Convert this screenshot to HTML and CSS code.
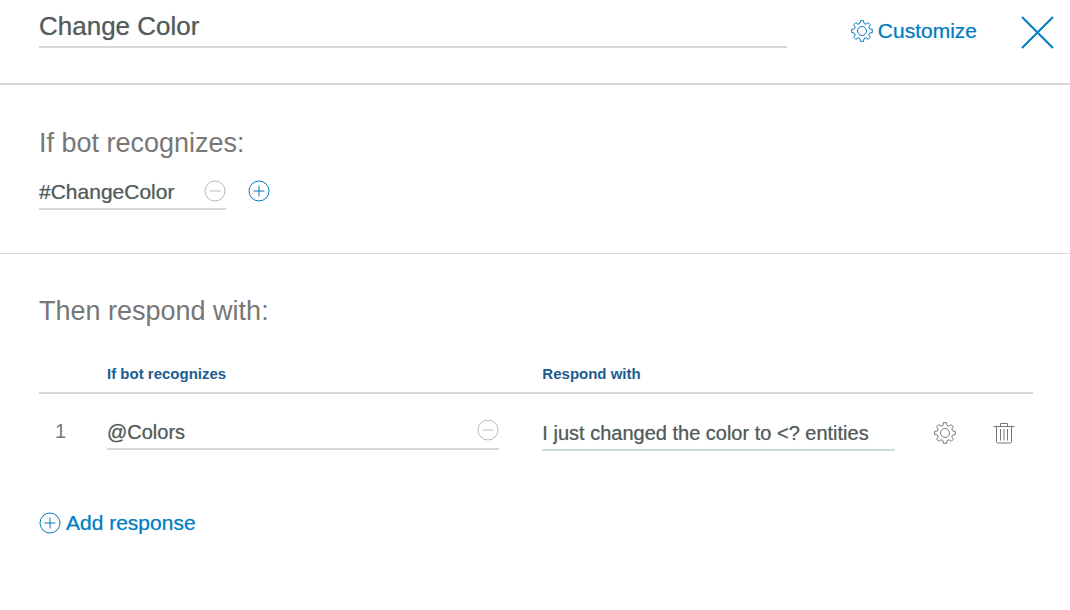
FILE: index.html
```html
<!DOCTYPE html>
<html lang="en">
<head>
<meta charset="utf-8">
<title>Change Color</title>
<link rel="stylesheet" href="styles.css">
</head>
<body>
<svg class="sprite" aria-hidden="true">
  <symbol id="gear" viewBox="0 0 22 22">
    <path stroke-linejoin="round" d="M9.1 3.100L9.4 .7H12.6L12.9 3.100Q13.8 4.200 15.2 4.100L17.2 2.600L19.4 4.800L17.9 6.800Q17.8 8.200 18.9 9.100L21.3 9.400V12.6L18.9 12.9Q17.8 13.8 17.9 15.2L19.4 17.2L17.2 19.4L15.2 17.9Q13.8 17.8 12.9 18.9L12.6 21.3H9.4L9.1 18.9Q8.2 17.8 6.800 17.9L4.800 19.4L2.600 17.2L4.100 15.2Q4.200 13.8 3.100 12.9L.7 12.6V9.400L3.100 9.100Q4.200 8.200 4.100 6.800L2.600 4.800L4.800 2.600L6.800 4.100Q8.200 4.200 9.1 3.100Z"/>
    <circle cx="11" cy="11" r="4.500"/>
  </symbol>
  <symbol id="plus" viewBox="0 0 22 22"><circle cx="11" cy="11" r="10"/><path d="M11 5.500v11M5.500 11h11"/></symbol>
  <symbol id="minus" viewBox="0 0 22 22"><circle cx="11" cy="11" r="10"/><path d="M5.500 11h11"/></symbol>
  <symbol id="trash" viewBox="0 0 22 22"><path d="M.5 4.500h21M7.500 4.500v-3h7v3M3.500 4.500v15q0 1.500 1.500 1.500h12q1.500 0 1.500-1.500v-15M7.500 7v11.500M11 7v11.500M14.500 7v11.500"/></symbol>
</svg>
<header class="topbar">
  <input class="field title" aria-label="Node name" value="Change Color">
  <button class="action"><svg class="icon"><use href="#gear"/></svg>Customize</button>
  <button class="close" aria-label="Close"><svg viewBox="0 0 33 33"><path d="M1 1l31 31M32 1L1 32"/></svg></button>
</header>
<main>
  <section class="conditions">
    <h2>If bot recognizes:</h2>
    <div class="condition-row">
      <div class="field condition">
        <input aria-label="Condition" value="#ChangeColor">
        <button class="muted" aria-label="Remove condition"><svg class="icon"><use href="#minus"/></svg></button>
      </div>
      <button class="action" aria-label="Add condition"><svg class="icon"><use href="#plus"/></svg></button>
    </div>
  </section>
  <section class="responses">
    <h2>Then respond with:</h2>
    <table>
      <thead>
        <tr><th class="col-index"></th><th class="col-condition">If bot recognizes</th><th>Respond with</th><th class="col-tools"></th></tr>
      </thead>
      <tbody>
        <tr>
          <td class="index">1</td>
          <td class="entity">
            <div class="field">
              <input aria-label="Response condition" value="@Colors">
              <button class="muted" aria-label="Remove response condition"><svg class="icon"><use href="#minus"/></svg></button>
            </div>
          </td>
          <td><div class="field reply"><input aria-label="Response text" value="I just changed the color to &lt;? entities"></div></td>
          <td>
            <div class="tools">
              <button aria-label="Response settings"><svg class="icon"><use href="#gear"/></svg></button>
              <button aria-label="Delete response"><svg class="icon"><use href="#trash"/></svg></button>
            </div>
          </td>
        </tr>
      </tbody>
    </table>
    <button class="action"><svg class="icon"><use href="#plus"/></svg>Add response</button>
  </section>
</main>
</body>
</html>
```

FILE: styles.css
```css
* { box-sizing: border-box; }
body {
  margin: 0;
  background: #fff;
  color: #525b5a;
  font-family: "Liberation Sans", Arial, sans-serif;
  font-size: 21px;
  line-height: 24px;
}
.sprite { position: absolute; width: 0; height: 0; }
button, input {
  margin: 0;
  padding: 0;
  border: 0;
  background: none;
  color: inherit;
  font: inherit;
}
input { min-width: 0; width: 100%; height: 24px; outline: 0; text-shadow: 0 0 1px #a0a6a5; }
button { display: flex; align-items: center; flex: none; cursor: pointer; }
svg { display: block; fill: none; stroke: currentColor; }
.icon { width: 22px; height: 22px; }

.topbar {
  display: flex;
  align-items: flex-start;
  padding: 6px 16px 34px 39px;
  border-bottom: 2px solid #d8d8d8;
}
.field {
  display: flex;
  align-items: center;
  border-bottom: 2px solid #d8d8d8;
}
.title { flex: 1; height: 42px; font-size: 26px; line-height: 40px; }
.action { gap: 5px; color: #047cc0; }
.topbar .action { margin: 13px 44px 0 64px; text-shadow: 0 0 1px #82bddf; }
.close { margin-top: 10px; color: #047cc0; }
.close svg { width: 33px; height: 33px; stroke-width: 2; }

h2 { margin: 0; color: #777; font-size: 27px; font-weight: 400; line-height: 32px; }
.conditions { padding: 42px 37px 43px 39px; border-bottom: 1px solid #d8d8d8; }
.condition-row { display: flex; align-items: flex-start; gap: 22px; margin-top: 21px; }
.condition { width: 187px; height: 30px; align-items: flex-start; }
.muted { color: #b4bfbd; }

.responses { padding: 41px 37px 0 39px; }
table { width: 100%; margin-top: 37px; border-collapse: collapse; table-layout: fixed; }
th {
  padding: 0 0 8px;
  border-bottom: 2px solid #d8d8d8;
  color: #1b5d91;
  font-size: 15px;
  line-height: 20px;
  text-align: left;
}
td { padding: 23px 0 0; vertical-align: top; font-size: 20px; }
.col-index { width: 68px; }
.col-condition { width: 43.8%; }
.col-tools { width: 138px; }
.index { padding: 25px 0 0 16px; color: #777; }
.entity { padding: 22px 43px 0 0; }
.entity .muted { align-self: flex-start; padding-top: 3px; }
td .field { height: 34px; }
.reply { padding-right: 16px; border-color: #cedbdb; }
.tools { display: flex; gap: 37px; padding: 5px 0 0 39px; color: #777; }
.responses > .action { margin-top: 60px; text-shadow: 0 0 1px #82bddf; }
```
